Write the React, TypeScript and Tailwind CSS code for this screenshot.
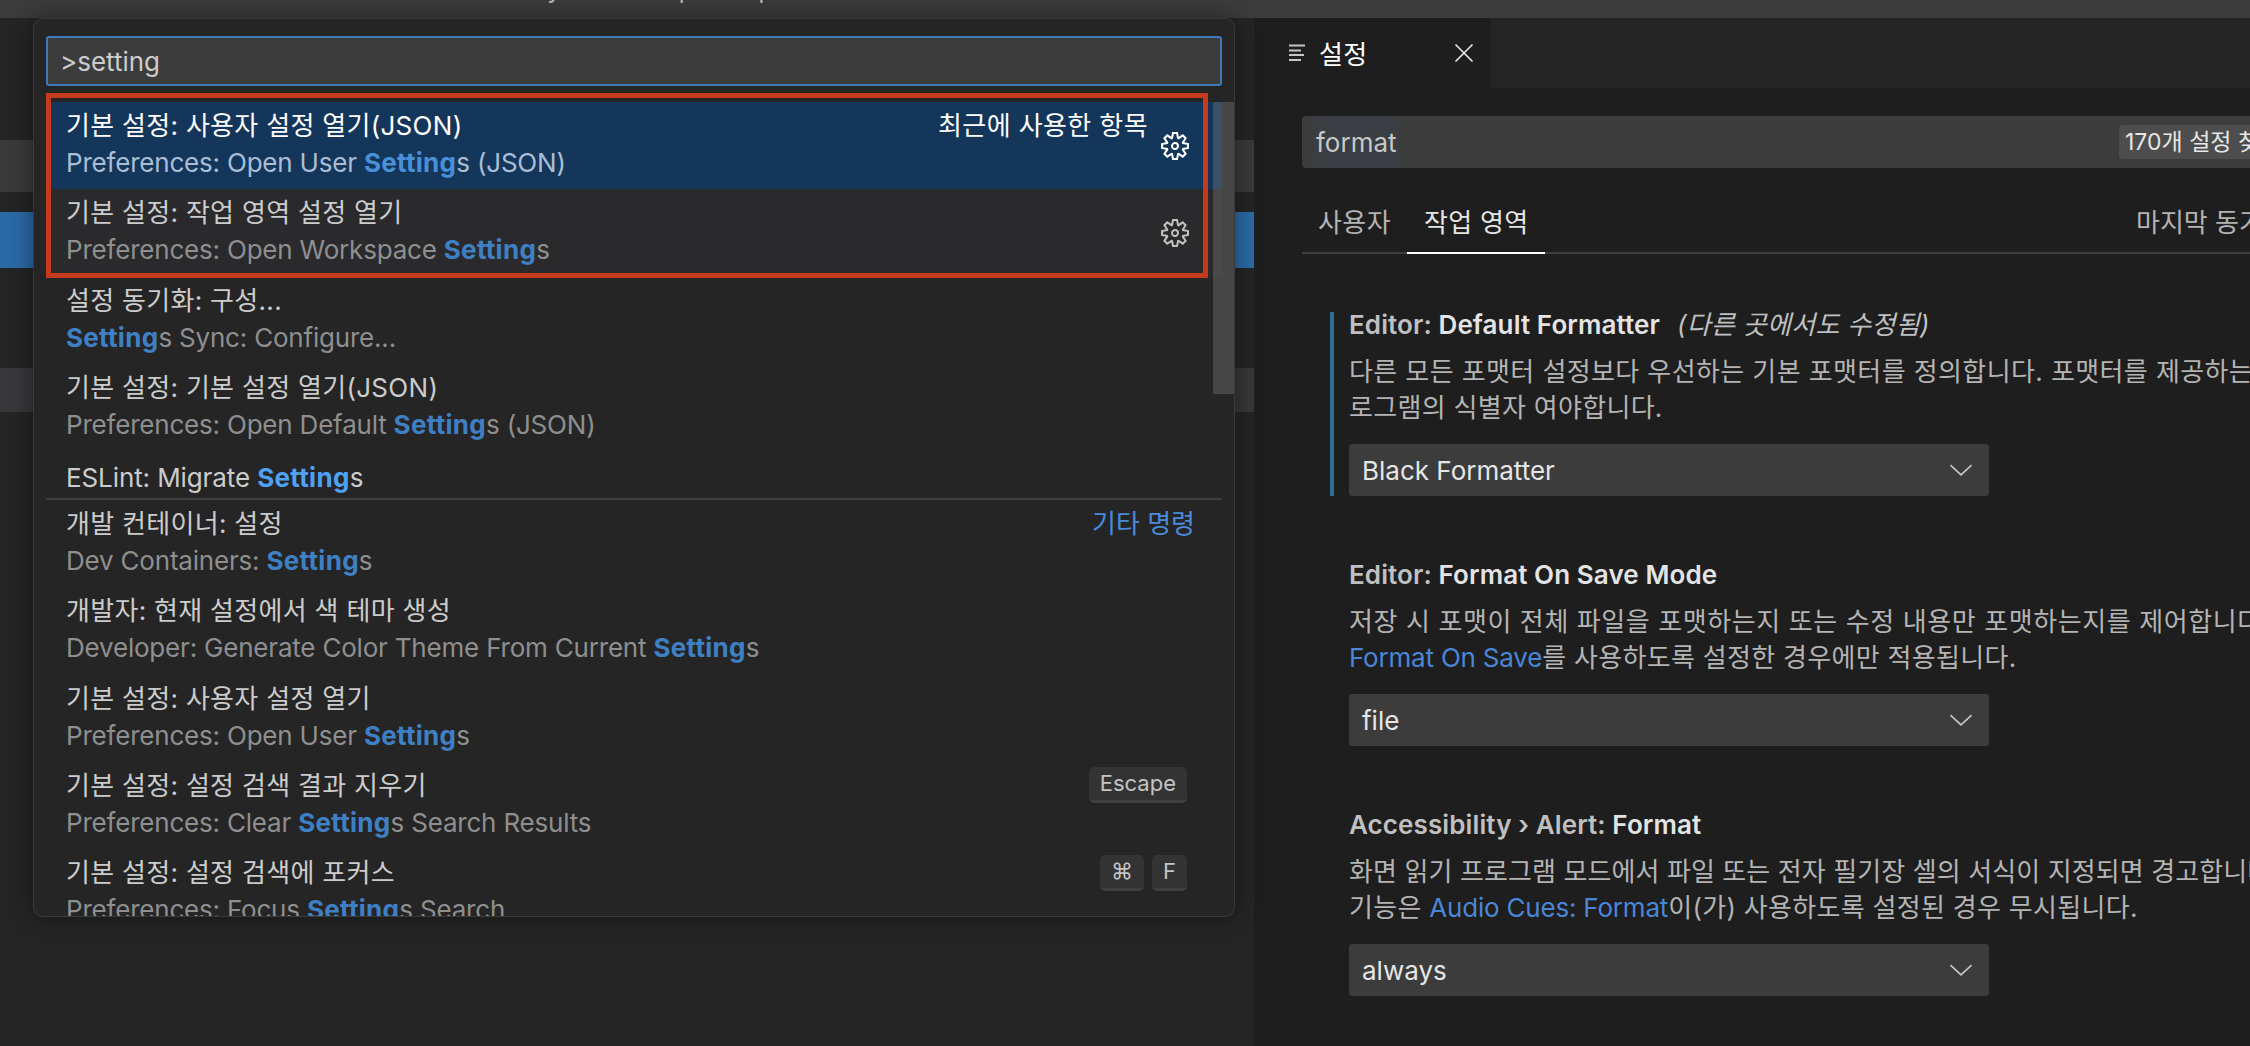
import { X } from "lucide-react";

const FONT = "font-['Inter','Noto_Sans_CJK_KR',sans-serif]";

function Gear({ className }: { className?: string }) {
  return (
    <svg viewBox="0 0 24 24" fill="currentColor" className={className}>
      <path
        fillRule="evenodd"
        d="M19.85 8.75l4.15.83v4.84l-4.15.83 2.35 3.52-3.43 3.43-3.52-2.35-.83 4.15H9.58l-.83-4.15-3.52 2.35-3.43-3.43 2.35-3.52L0 14.42V9.58l4.15-.83L1.8 5.23 5.23 1.8l3.52 2.35L9.58 0h4.84l.83 4.15 3.52-2.35 3.43 3.43-2.35 3.52zm-1.57 5.07l4-.81v-2l-4-.81-.54-1.3 2.29-3.43-1.43-1.43-3.43 2.29-1.3-.54-.81-4h-2l-.81 4-1.3.54-3.43-2.29-1.43 1.43L6.38 8.9l-.54 1.3-4 .81v2l4 .81.54 1.3-2.29 3.43 1.43 1.43 3.43-2.29 1.3.54.81 4h2l.81-4 1.3-.54 3.43 2.29 1.43-1.43-2.29-3.43.54-1.3zm-8.186-4.672A3.43 3.43 0 0 1 12 8.57 3.44 3.44 0 0 1 15.43 12a3.43 3.43 0 1 1-5.336-2.852zm.956 4.274c.281.188.612.288.95.288A1.7 1.7 0 0 0 13.71 12a1.71 1.71 0 1 0-2.66 1.422z"
      />
    </svg>
  );
}

function Chevron() {
  return (
    <svg viewBox="0 0 16 16" fill="none" stroke="#c8c8c8" strokeWidth="1" className="h-[26px] w-[26px]">
      <path d="M1.5 5 8 11 14.5 5" />
    </svg>
  );
}

function Kbd({ children }: { children: string }) {
  return (
    <span className="flex h-[36px] items-center rounded-[5px] border-b-[3px] border-[#3f3f3f] bg-[#333333] px-[11px] text-[22px] text-[#c4c4c4]">
      {children}
    </span>
  );
}

interface PickRow {
  title: string;
  pre: string;
  post: string;
  label?: string;
  keys?: string[];
  gear?: boolean;
  tone?: "selected" | "hover";
}

const topRows: PickRow[] = [
  {
    title: "기본 설정: 사용자 설정 열기(JSON)",
    pre: "Preferences: Open User ",
    post: "s (JSON)",
    label: "최근에 사용한 항목",
    gear: true,
    tone: "selected",
  },
  {
    title: "기본 설정: 작업 영역 설정 열기",
    pre: "Preferences: Open Workspace ",
    post: "s",
    gear: true,
    tone: "hover",
  },
  { title: "설정 동기화: 구성...", pre: "", post: "s Sync: Configure..." },
  { title: "기본 설정: 기본 설정 열기(JSON)", pre: "Preferences: Open Default ", post: "s (JSON)" },
];

const bottomRows: PickRow[] = [
  { title: "개발 컨테이너: 설정", pre: "Dev Containers: ", post: "s" },
  { title: "개발자: 현재 설정에서 색 테마 생성", pre: "Developer: Generate Color Theme From Current ", post: "s" },
  { title: "기본 설정: 사용자 설정 열기", pre: "Preferences: Open User ", post: "s" },
  {
    title: "기본 설정: 설정 검색 결과 지우기",
    pre: "Preferences: Clear ",
    post: "s Search Results",
    keys: ["Escape"],
  },
  {
    title: "기본 설정: 설정 검색에 포커스",
    pre: "Preferences: Focus ",
    post: "s Search",
    keys: ["⌘", "F"],
  },
];

function Row({ row }: { row: PickRow }) {
  const selected = row.tone === "selected";
  return (
    <div
      className={`flex h-[87.3px] shrink-0 items-start pl-[20px] pt-[5px] ${
        selected ? "bg-[#14365a]" : row.tone === "hover" ? "bg-[#2a2a2c]" : ""
      }`}
    >
      <div className="min-w-0 flex-1">
        <div
          className={`flex h-[37px] items-center justify-between text-[26px] leading-[37px] ${
            selected ? "text-white" : "text-[#cccccc]"
          }`}
        >
          <span className="tracking-[0.3px]">{row.title}</span>
          {row.label && <span className="mr-[13px] tracking-[0.4px]">{row.label}</span>}
          {row.keys && (
            <span className="mr-[35px] flex gap-[8px]">
              {row.keys.map((k) => (
                <Kbd key={k}>{k}</Kbd>
              ))}
            </span>
          )}
        </div>
        <div
          className={`h-[37px] text-[26px] leading-[37px] tracking-[-0.2px] ${
            selected ? "text-[#a9bed4]" : "text-[#8f8f8f]"
          }`}
        >
          {row.pre}
          <span className={`font-bold tracking-[0.3px] ${selected ? "text-[#4a90d8]" : "text-[#3f80c4]"}`}>
            Setting
          </span>
          {row.post}
        </div>
      </div>
      {row.gear && (
        <Gear
          className={`mr-[33px] mt-[-5px] h-[28px] w-[28px] self-center ${selected ? "text-white" : "text-[#c0c0c0]"}`}
        />
      )}
    </div>
  );
}

function QuickPick() {
  return (
    <div className="absolute left-[33px] top-[18px] flex h-[899px] w-[1202px] flex-col overflow-hidden rounded-[10px] border border-[#3a3a3a] bg-[#252526] shadow-[0_0_24px_rgba(0,0,0,0.45)]">
      <div className="mx-[12px] mt-[17px] flex h-[50px] shrink-0 items-center rounded-[3px] border-2 border-[#3d7ab8] bg-[#3c3c3c] pl-[12px] text-[26px] text-[#cccccc]">
        &gt;setting
      </div>
      <div className="mx-[12px] mt-[16px] flex flex-col">
        {topRows.map((r) => (
          <Row key={r.title} row={r} />
        ))}
        <div className="flex h-[46.8px] shrink-0 items-center pl-[20px] pt-[5px] text-[26px] tracking-[-0.1px] text-[#cccccc]">
          <span>
            ESLint: Migrate <span className="font-bold tracking-[0.3px] text-[#4ea1f3]">Setting</span>s
          </span>
        </div>
        <div className="h-[2px] shrink-0 rounded-full bg-[#3f3f3f]" />
        <div className="relative flex flex-col">
          {bottomRows.map((r) => (
            <Row key={r.title} row={r} />
          ))}
          <span className="absolute right-[27px] top-[5px] text-[26px] leading-[37px] text-[#4a8bdc]">기타 명령</span>
        </div>
      </div>
      {/* scrollbar slider */}
      <div className="absolute left-[1179px] top-[83px] h-[292px] w-[21px] bg-[#797979]/40" />
      {/* red annotation box */}
      <div className="absolute left-[12px] top-[74px] h-[185px] w-[1162px] border-[5px] border-[#c63a1e]" />
    </div>
  );
}

function Setting({
  first,
  scope,
  name,
  extra,
  lines,
  value,
}: {
  first?: boolean;
  scope: string;
  name: string;
  extra?: string;
  lines: React.ReactNode[];
  value: string;
}) {
  return (
    <div className={first ? "ml-[76px] mt-[58px] border-l-4 border-[#2f6f95] pl-[15px]" : "ml-[95px] mt-[66px]"}>
      <div className="h-[26px] whitespace-nowrap text-[26px] leading-[26px] font-semibold tracking-[0.1px] text-[#c0c0c0]">
        {scope} <span className="text-[#e4e4e4]">{name}</span>
        {extra && <em className="ml-[17px] font-normal tracking-[0.3px] text-[#c0c0c0]">{extra}</em>}
      </div>
      <div className="mt-[16px] whitespace-nowrap text-[26px] leading-[36px] text-[#b4b4b4]">
        {lines.map((line, i) => (
          <div key={i}>{line}</div>
        ))}
      </div>
      <div className="mt-[18px] flex h-[52px] w-[640px] items-center justify-between rounded-[3px] bg-[#3c3c3c] pl-[13px] pr-[15px] text-[26px] text-[#e6e6e6]">
        {value}
        <Chevron />
      </div>
    </div>
  );
}

const linkCls = "tracking-[-0.2px] text-[#4a86d8]";

export default function App() {
  return (
    <div className={`flex h-[1046px] w-[2250px] flex-col overflow-hidden bg-[#252526] ${FONT}`}>
      {/* title bar */}
      <div className="relative h-[18px] shrink-0 overflow-hidden bg-[#3c3c3c]">
        <span className="absolute left-[478px] top-[-25px] whitespace-nowrap text-[26px] leading-[28px] text-[#b5b5b5]">
          설정 sync — temp — tap
        </span>
      </div>
      <div className="relative flex min-h-0 flex-1">
        {/* editor area behind the palette */}
        <div className="flex w-[1254px] shrink-0 flex-col">
          <div className="mt-[122px] h-[52px] bg-[#3a3a3a]" />
          <div className="mt-[20px] h-[56px] bg-[#2b6aa8]" />
          <div className="mt-[100px] h-[44px] bg-[#38383b]" />
        </div>

        {/* settings editor */}
        <div className="flex min-w-0 flex-1 flex-col overflow-hidden bg-[#1e1e1e]">
          <div className="flex h-[70px] shrink-0 bg-[#252526]">
            <div className="flex w-[237px] items-center bg-[#1e1e1e] pl-[35px] text-[26px] text-white">
              <svg viewBox="0 0 17 17" stroke="#c5c5c5" strokeWidth="2" className="mt-[-2px] h-[17px] w-[17px]">
                <path d="M0 1.5h16M0 6.5h12M0 11h15M0 16h12" />
              </svg>
              <span className="ml-[13px] pt-[3px] leading-none tracking-[0.3px]">설정</span>
              <X className="ml-[81px] h-[32px] w-[32px] text-[#e4e4e4]" strokeWidth={1.3} />
            </div>
          </div>

          <div className="ml-[48px] mt-[28px] flex h-[52px] shrink-0 items-center overflow-hidden rounded-l-[4px] bg-[#3c3c3c] pl-[12px] text-[26px] text-[#c8c8c8]">
            <span className="flex h-full items-center bg-[#3a3d41] px-[2px]">format</span>
            <span className="ml-auto flex h-[34px] w-[131px] items-center overflow-hidden whitespace-nowrap rounded-l-[4px] bg-[#4d4d4d] pl-[6px] text-[23px] text-[#e6e6e6]">
              170개 설정 찾음
            </span>
          </div>

          <div className="ml-[48px] mt-[26px] flex h-[60px] shrink-0 border-b-2 border-[#3f3f3f]">
            <div className="flex items-center px-[16px] pb-[2px] text-[26px] tracking-[0.4px] text-[#b4b4b4]">
              사용자
            </div>
            <div className="mb-[-2px] flex items-center border-b-2 border-white px-[17px] pb-[2px] text-[26px] tracking-[0.3px] text-[#e6e6e6]">
              작업 영역
            </div>
            <div className="ml-auto flex w-[114px] items-center overflow-hidden whitespace-nowrap pb-[2px] text-[26px] text-[#b4b4b4]">
              마지막 동기화
            </div>
          </div>

          <Setting
            first
            scope="Editor:"
            name="Default Formatter"
            extra="(다른 곳에서도 수정됨)"
            lines={[
              <span className="tracking-[0.4px]">
                다른 모든 포맷터 설정보다 우선하는 기본 포맷터를 정의합니다. 포맷터를 제공하는 확장 프
              </span>,
              <span className="tracking-[0.3px]">로그램의 식별자 여야합니다.</span>,
            ]}
            value="Black Formatter"
          />
          <Setting
            scope="Editor:"
            name="Format On Save Mode"
            lines={[
              <span className="tracking-[0.6px]">
                저장 시 포맷이 전체 파일을 포맷하는지 또는 수정 내용만 포맷하는지를 제어합니다. Editor:
              </span>,
              <span className="tracking-[0.3px]">
                <span className={linkCls}>Format On Save</span>를 사용하도록 설정한 경우에만 적용됩니다.
              </span>,
            ]}
            value="file"
          />
          <Setting
            scope="Accessibility › Alert:"
            name="Format"
            lines={[
              <span className="tracking-[0.1px]">
                화면 읽기 프로그램 모드에서 파일 또는 전자 필기장 셀의 서식이 지정되면 경고합니다. 이
              </span>,
              <span className="tracking-[0.3px]">
                기능은 <span className={linkCls}>Audio Cues: Format</span>이(가) 사용하도록 설정된 경우 무시됩니다.
              </span>,
            ]}
            value="always"
          />
        </div>
      </div>
      <QuickPick />
    </div>
  );
}
